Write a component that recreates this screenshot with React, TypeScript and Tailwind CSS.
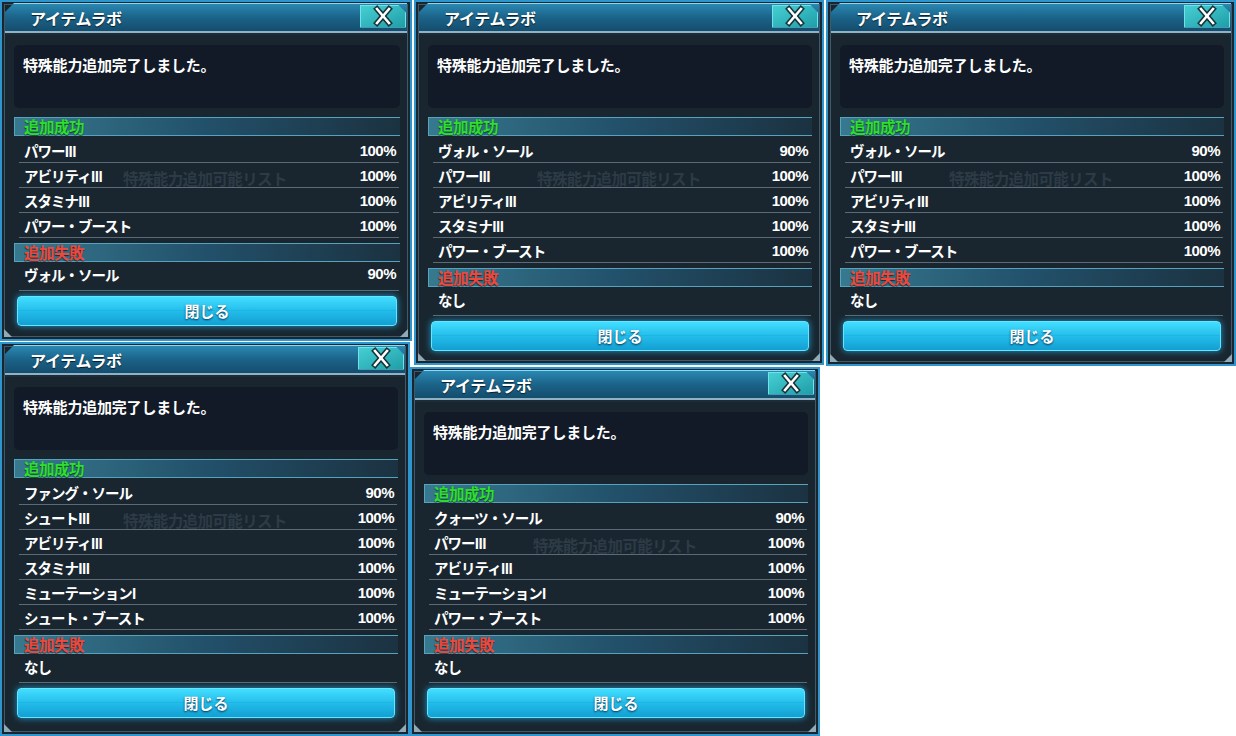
import React from "react";

type Item = { name: string; pct: string };

const CloseX = () => (
  <svg width="24" height="22" viewBox="0 0 24 22">
    <g strokeLinecap="square">
      <line x1="6" y1="4" x2="18" y2="18" stroke="#173338" strokeWidth="5.5" />
      <line x1="18" y1="4" x2="6" y2="18" stroke="#173338" strokeWidth="5.5" />
      <line x1="6" y1="4" x2="18" y2="18" stroke="#ffffff" strokeWidth="2.6" />
      <line x1="18" y1="4" x2="6" y2="18" stroke="#ffffff" strokeWidth="2.6" />
    </g>
  </svg>
);

const SectionHeader = ({ label, kind }: { label: string; kind: "ok" | "ng" }) => (
  <div className="relative ml-[12px] mr-[10px] h-[19px] flex items-center pl-[9px] border-y border-l border-[#55a3bd] bg-gradient-to-r from-[#37798f] via-[#22506a] to-[#1b3241]">
    <span
      className={
        kind === "ok"
          ? "text-[15.5px] leading-none font-bold text-[#2ee02a] tracking-[-0.5px] [text-shadow:0_1px_1px_rgba(0,0,0,0.6)]"
          : "text-[15.5px] leading-none font-bold text-[#f0473a] tracking-[-0.5px] [text-shadow:0_1px_1px_rgba(0,0,0,0.6)]"
      }
    >
      {label}
    </span>
  </div>
);

const Row = ({ item, tall }: { item: Item; tall?: boolean }) => (
  <div
    className={
      tall
        ? "ml-[17px] mr-[11px] h-[29px] pb-[3px] flex items-center justify-between pl-[5px] pr-[3px] border-b border-[#5b6a74]"
        : "ml-[17px] mr-[11px] h-[25px] pt-[2px] flex items-center justify-between pl-[5px] pr-[3px] border-b border-[#5b6a74]"
    }
  >
    <span className="text-[14.5px] font-bold text-white tracking-[-1px]">{item.name}</span>
    <span className="text-[15px] font-bold text-white tracking-[-0.5px] font-['Liberation_Sans',sans-serif]">
      {item.pct}
    </span>
  </div>
);

const Panel = ({
  success,
  failure,
  className,
}: {
  success: Item[];
  failure: Item[];
  className: string;
}) => (
  <div
    className={
      "relative flex flex-col bg-[#19262f] border-2 border-[#2e95cd] font-['Noto_Sans_CJK_JP',sans-serif] " +
      className
    }
  >
    <div className="pointer-events-none absolute inset-[2px] border border-[#3f5a6a]" />
    <div className="pointer-events-none absolute left-[2px] bottom-[2px] w-[8px] h-[8px] bg-[#8fabb8] [clip-path:polygon(0_0,100%_100%,0_100%)]" />
    <div className="pointer-events-none absolute right-[2px] bottom-[2px] w-[8px] h-[8px] bg-[#8fabb8] [clip-path:polygon(100%_0,100%_100%,0_100%)]" />
    <div className="pointer-events-none absolute left-[121px] top-[165px] text-[15.5px] font-bold text-[#2c3b46] tracking-[-0.6px] whitespace-nowrap">
      特殊能力追加可能リスト
    </div>
    {/* title bar */}
    <div className="relative mx-[3px] mt-[1px] h-[28px] flex items-center bg-gradient-to-b from-[#2a88b2] via-[#1b6389] to-[#144d6e] border-t border-[#86dcf5] [clip-path:polygon(9px_0,100%_0,100%_100%,0_100%,0_9px)]">
      <span className="ml-[25px] text-[16px] font-bold text-white tracking-[-0.3px] [text-shadow:0_1px_1px_rgba(0,0,0,0.7)]">
        アイテムラボ
      </span>
      <div className="ml-auto mr-[1px] mb-[3px] w-[46px] h-[23px] flex items-center justify-center bg-gradient-to-br from-[#45cfd3] to-[#1f9ea8] border border-[#6fe3e8] [clip-path:polygon(0_0,calc(100%-8px)_0,100%_8px,100%_100%,0_100%)]">
        <CloseX />
      </div>
    </div>
    <div className="relative mx-[3px] h-[4px] border-t-2 border-[#8fb3c4] bg-[#1d2c37]" />
    <div className="relative mt-[10px] ml-[12px] mr-[10px] h-[63px] rounded-[5px] bg-[#121a28] pl-[9px] pt-[7px]">
      <span className="text-[15px] font-bold text-white tracking-[-0.2px]">特殊能力追加完了しました。</span>
    </div>
    <div className="h-[9px]" />
    <SectionHeader label="追加成功" kind="ok" />
    <div className="h-[2px]" />
    {success.map((it, i) => (
      <Row key={i} item={it} />
    ))}
    <div className="h-[5px]" />
    <SectionHeader label="追加失敗" kind="ng" />
    {failure.map((it, i) => (
      <Row key={i} item={it} tall />
    ))}
    <div className="relative mt-[5px] ml-[15px] mr-[13px] h-[30px] rounded-[4px] border border-[#63e6ff] bg-gradient-to-b from-[#42deff] via-[#22bdea] to-[#139fd2] shadow-[0_0_7px_rgba(40,190,255,0.75)] flex items-center justify-center">
      <div className="absolute left-0 right-0 top-[13px] h-[1px] bg-[#1aa6d8]/40" />
      <span className="relative text-[15px] font-bold text-white [text-shadow:0_1px_2px_rgba(0,40,70,0.9)]">閉じる</span>
    </div>
  </div>
);

const p1s: Item[] = [
  { name: "パワーIII", pct: "100%" },
  { name: "アビリティIII", pct: "100%" },
  { name: "スタミナIII", pct: "100%" },
  { name: "パワー・ブースト", pct: "100%" },
];
const p1f: Item[] = [{ name: "ヴォル・ソール", pct: "90%" }];
const p2s: Item[] = [
  { name: "ヴォル・ソール", pct: "90%" },
  { name: "パワーIII", pct: "100%" },
  { name: "アビリティIII", pct: "100%" },
  { name: "スタミナIII", pct: "100%" },
  { name: "パワー・ブースト", pct: "100%" },
];
const none: Item[] = [{ name: "なし", pct: "" }];
const p4s: Item[] = [
  { name: "ファング・ソール", pct: "90%" },
  { name: "シュートIII", pct: "100%" },
  { name: "アビリティIII", pct: "100%" },
  { name: "スタミナIII", pct: "100%" },
  { name: "ミューテーションI", pct: "100%" },
  { name: "シュート・ブースト", pct: "100%" },
];
const p5s: Item[] = [
  { name: "クォーツ・ソール", pct: "90%" },
  { name: "パワーIII", pct: "100%" },
  { name: "アビリティIII", pct: "100%" },
  { name: "ミューテーションI", pct: "100%" },
  { name: "パワー・ブースト", pct: "100%" },
];

export default function App() {
  return (
    <div className="w-[1236px] h-[736px] bg-white overflow-hidden flex items-start">
      <div className="w-[412px] flex flex-col">
        <Panel success={p1s} failure={p1f} className="w-[412px] h-[341px]" />
        <Panel success={p4s} failure={none} className="mt-[1px] w-[410px] h-[394px]" />
      </div>
      <div className="ml-[2px] w-[410px] flex flex-col">
        <Panel success={p2s} failure={none} className="w-[410px] h-[365px]" />
        <Panel success={p5s} failure={none} className="mt-[2px] -ml-[4px] w-[410px] h-[369px]" />
      </div>
      <div className="ml-[2px] w-[410px] flex flex-col">
        <Panel success={p2s} failure={none} className="w-[410px] h-[366px]" />
      </div>
    </div>
  );
}
